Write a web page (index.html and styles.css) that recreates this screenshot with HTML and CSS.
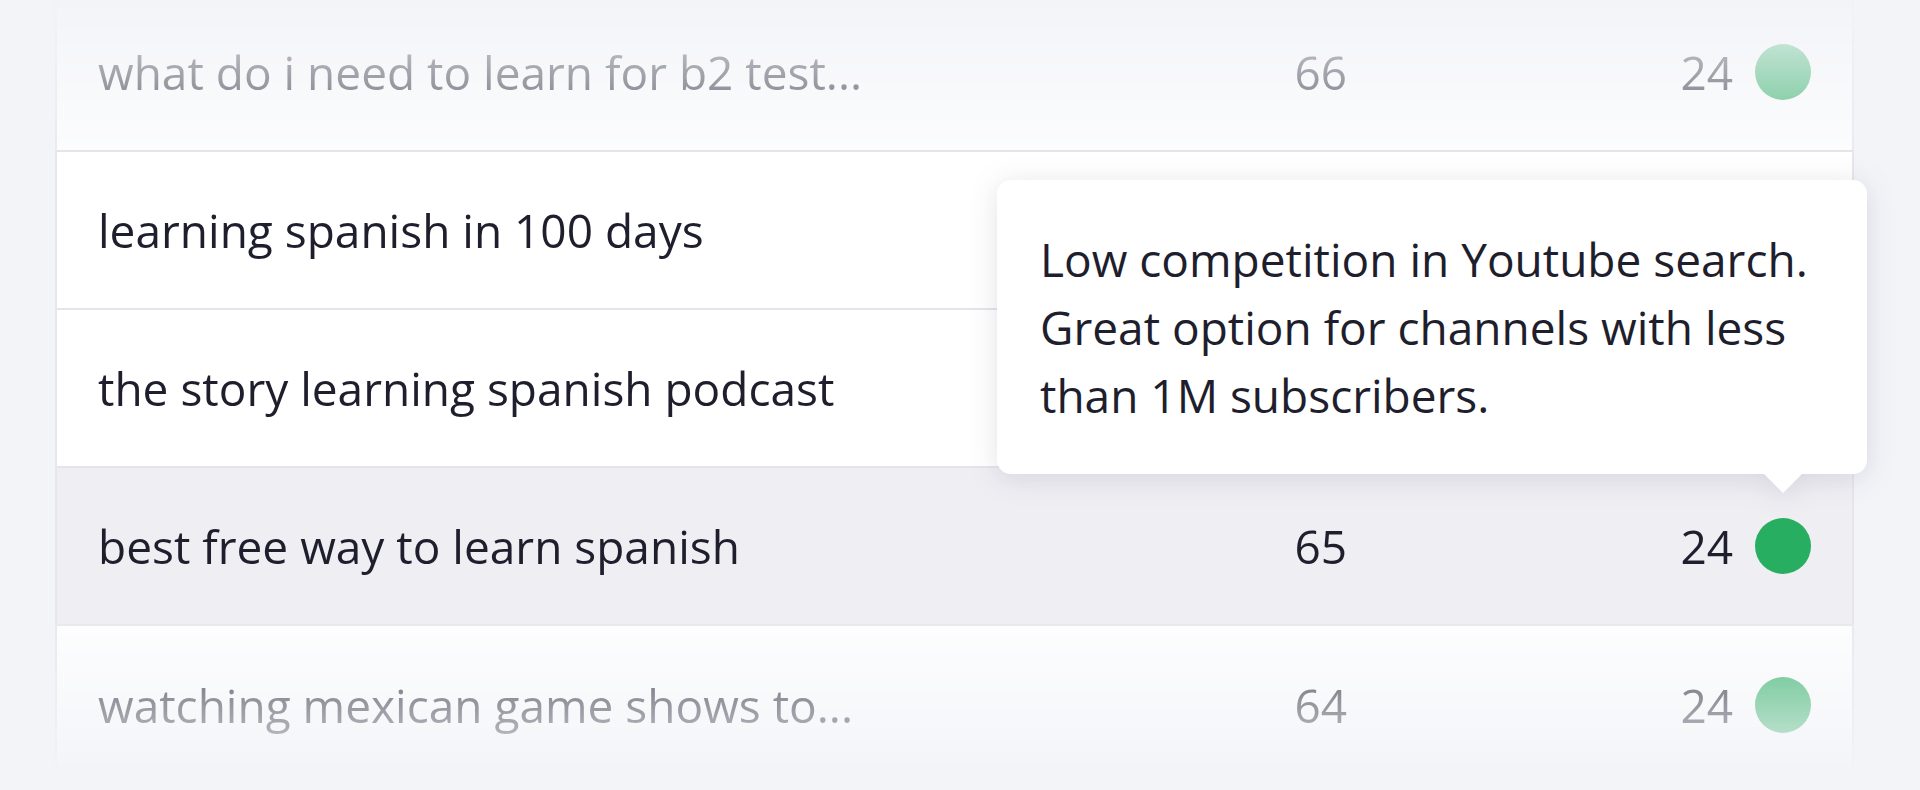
FILE: index.html
```html
<!DOCTYPE html>
<html lang="en">
<head>
<meta charset="utf-8">
<title>Keywords</title>
<link rel="stylesheet" href="styles.css">
</head>
<body>
<div class="page">
  <div class="table-wrap">
    <div class="table">
      <div class="row">
        <span class="name">what do i need to learn for b2 test...</span>
        <span class="num">66</span>
        <span class="score">24<i class="dot"></i></span>
      </div>
      <div class="row">
        <span class="name">learning spanish in 100 days</span>
        <span class="num"></span>
        <span class="score"><i class="dot"></i></span>
      </div>
      <div class="row">
        <span class="name">the story learning spanish podcast</span>
        <span class="num"></span>
        <span class="score"><i class="dot"></i></span>
      </div>
      <div class="row row-active">
        <span class="name">best free way to learn spanish</span>
        <span class="num">65</span>
        <span class="score">24<i class="dot"></i></span>
      </div>
      <div class="row row-last">
        <span class="name">watching mexican game shows to...</span>
        <span class="num">64</span>
        <span class="score">24<i class="dot"></i></span>
      </div>
    </div>
    <div class="tooltip">Low competition in Youtube search.<br>Great option for channels with less<br>than 1M subscribers.</div>
  </div>
</div>
</body>
</html>
```

FILE: styles.css
```css
html, body {
  margin: 0;
  padding: 0;
}

body {
  background: #f3f4f8;
  font-family: "Open Sans", "Noto Sans", sans-serif;
  color: #1e1e2d;
}

.page {
  height: 790px;
  overflow: hidden;
  padding-left: 55px;
}

.table-wrap {
  position: relative;
  width: 1799px;
  margin-top: -6px;
}

.table {
  background: #ffffff;
  border-left: 2px solid #e6e6ec;
  border-right: 2px solid #e6e6ec;
  -webkit-mask-image: linear-gradient(to bottom,
    rgba(0,0,0,0.02) 0px,
    rgba(0,0,0,0.72) 156px,
    #000 156px,
    #000 630px,
    rgba(0,0,0,0.8) 630px,
    rgba(0,0,0,0.3) 740px,
    rgba(0,0,0,0) 780px);
  mask-image: linear-gradient(to bottom,
    rgba(0,0,0,0.02) 0px,
    rgba(0,0,0,0.72) 156px,
    #000 156px,
    #000 630px,
    rgba(0,0,0,0.8) 630px,
    rgba(0,0,0,0.3) 740px,
    rgba(0,0,0,0) 780px);
}

.row {
  box-sizing: border-box;
  height: 158px;
  display: grid;
  grid-template-columns: 1fr 200px 464px;
  align-items: center;
  padding: 0 41px;
  border-bottom: 2px solid #e4e4ea;
  font-size: 46px;
  white-space: nowrap;
}

.row-active {
  background: #efeef3;
}

.row-last {
  border-bottom: none;
  height: 170px;
  padding-bottom: 12px;
}

.num {
  text-align: right;
}

.score {
  display: flex;
  justify-content: flex-end;
  align-items: center;
  gap: 22px;
}

.dot {
  display: block;
  width: 56px;
  height: 56px;
  border-radius: 50%;
  background: #28ae60;
}

.tooltip {
  position: absolute;
  left: 942px;
  top: 186px;
  width: 870px;
  box-sizing: border-box;
  padding: 45px 43px;
  background: #ffffff;
  border-radius: 14px;
  font-size: 46px;
  line-height: 68px;
  color: #1e1e2d;
  white-space: nowrap;
  filter: drop-shadow(0 4px 14px rgba(40, 40, 80, 0.13));
}

.tooltip::after {
  content: "";
  position: absolute;
  left: 767px;
  bottom: -19px;
  width: 0;
  height: 0;
  border-left: 19px solid transparent;
  border-right: 19px solid transparent;
  border-top: 19px solid #ffffff;
}
```
